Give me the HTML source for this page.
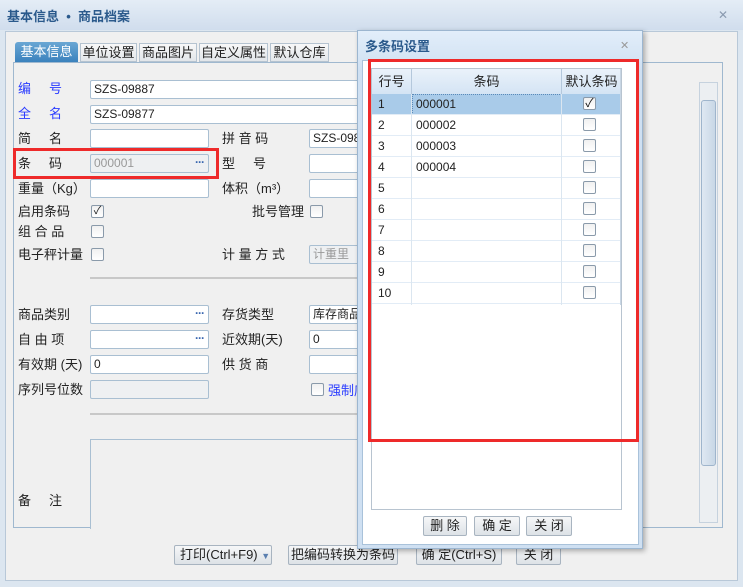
<!DOCTYPE html>
<html><head><meta charset="utf-8"><style>
*{margin:0;padding:0;box-sizing:border-box}
body{width:743px;height:587px;overflow:hidden;background:#dce6f0;font-family:"Liberation Sans","Noto Sans CJK SC",sans-serif;font-size:12px;color:#222;position:relative}
.a{position:absolute}
.lb{position:absolute;font-size:13px;line-height:18px;white-space:pre}
.in{position:absolute;height:19px;border:1px solid #a9bfd2;border-radius:2px;background:#fff;font-size:12px;line-height:17px;padding-left:3px;overflow:hidden;white-space:nowrap}
.dis{background:#eef0f2;color:#999}
.dots{position:absolute;right:4px;top:-1px;color:#3a67b0;font-weight:bold;letter-spacing:-1px}
.cb{position:absolute;width:13px;height:13px;border:1px solid #8a9aaa;border-radius:2px;background:linear-gradient(#f0f0f0,#fff)}
.btn{position:absolute;height:20px;border:1px solid #a8b4c0;border-radius:2px;background:linear-gradient(#f6f7f8,#dde2e7);font-size:13px;line-height:18px;text-align:center;white-space:nowrap;overflow:hidden}
.blue{color:#2a3cff}
</style></head><body>
<div class="a" style="left:0;top:0;width:743px;height:30px;background:linear-gradient(#e4edf6,#d0dded)"></div>
<div class="a" style="left:7px;top:6px;font-size:13px;font-weight:bold;color:#2b5a8c">基本信息 &nbsp;•&nbsp; 商品档案</div>
<div class="a" style="left:718px;top:8px;color:#8a9ab0;font-size:12px">✕</div>
<div class="a" style="left:5px;top:31px;width:733px;height:550px;background:#f0f0f0;border:1px solid #b8c8d8"></div>
<div class="a" style="left:15px;top:42px;width:63px;height:20px;background:linear-gradient(#6aa7d4,#3b82bd);color:#fff;font-size:13px;line-height:20px;text-align:center;border-radius:3px 3px 0 0">基本信息</div>
<div class="a" style="left:80px;top:43px;width:57px;height:19px;background:linear-gradient(#f8f8f8,#e2e6ea);border:1px solid #b5c3d0;font-size:13px;line-height:17px;text-align:center">单位设置</div>
<div class="a" style="left:139px;top:43px;width:58px;height:19px;background:linear-gradient(#f8f8f8,#e2e6ea);border:1px solid #b5c3d0;font-size:13px;line-height:17px;text-align:center">商品图片</div>
<div class="a" style="left:199px;top:43px;width:69px;height:19px;background:linear-gradient(#f8f8f8,#e2e6ea);border:1px solid #b5c3d0;font-size:13px;line-height:17px;text-align:center">自定义属性</div>
<div class="a" style="left:270px;top:43px;width:59px;height:19px;background:linear-gradient(#f8f8f8,#e2e6ea);border:1px solid #b5c3d0;font-size:13px;line-height:17px;text-align:center">默认仓库</div>
<div class="a" style="left:13px;top:62px;width:710px;height:466px;border:1px solid #9fb8cf;background:#f0f0f0"></div>
<div class="a" style="left:699px;top:82px;width:19px;height:441px;border:1px solid #c6d2de;background:#eceff2"></div>
<div class="a" style="left:701px;top:100px;width:15px;height:366px;border:1px solid #9fb5cc;border-radius:3px;background:linear-gradient(90deg,#dfe8f2,#c8d7e6)"></div>
<div class="lb blue" style="left:18px;top:80px">编     号</div>
<div class="in" style="left:90px;top:80px;width:270px">SZS-09887</div>
<div class="lb blue" style="left:18px;top:105px">全     名</div>
<div class="in" style="left:90px;top:105px;width:270px">SZS-09877</div>
<div class="lb" style="left:18px;top:130px">简     名</div>
<div class="in" style="left:90px;top:129px;width:119px"></div>
<div class="lb" style="left:222px;top:130px">拼 音 码</div>
<div class="in" style="left:309px;top:129px;width:60px">SZS-098</div>
<div class="lb" style="left:18px;top:155px">条     码</div>
<div class="in dis" style="left:90px;top:154px;width:119px">000001<span class="dots">···</span></div>
<div class="a" style="left:13px;top:148px;width:206px;height:31px;border:3px solid #ee2a2a"></div>
<div class="lb" style="left:222px;top:155px">型     号</div>
<div class="in" style="left:309px;top:154px;width:60px"></div>
<div class="lb" style="left:18px;top:180px">重量（Kg）</div>
<div class="in" style="left:90px;top:179px;width:119px"></div>
<div class="lb" style="left:222px;top:180px">体积（m³）</div>
<div class="in" style="left:309px;top:179px;width:60px"></div>
<div class="lb" style="left:18px;top:203px">启用条码</div>
<div class="cb" style="left:91px;top:205px;font-size:11px;line-height:11px;text-align:center">✓</div>
<div class="lb" style="left:252px;top:203px">批号管理</div>
<div class="cb" style="left:310px;top:205px"></div>
<div class="lb" style="left:18px;top:223px">组 合 品</div>
<div class="cb" style="left:91px;top:225px"></div>
<div class="lb" style="left:18px;top:246px">电子秤计量</div>
<div class="cb" style="left:91px;top:248px"></div>
<div class="lb" style="left:222px;top:246px">计 量 方 式</div>
<div class="in dis" style="left:309px;top:245px;width:60px">计重里</div>
<div class="a" style="left:90px;top:277px;width:280px;height:2px;background:#c8c8c8"></div>
<div class="lb" style="left:18px;top:306px">商品类别</div>
<div class="in" style="left:90px;top:305px;width:119px"><span class="dots">···</span></div>
<div class="lb" style="left:222px;top:306px">存货类型</div>
<div class="in" style="left:309px;top:305px;width:60px">库存商品</div>
<div class="lb" style="left:18px;top:331px">自 由 项</div>
<div class="in" style="left:90px;top:330px;width:119px"><span class="dots">···</span></div>
<div class="lb" style="left:222px;top:331px">近效期(天)</div>
<div class="in" style="left:309px;top:330px;width:60px">0</div>
<div class="lb" style="left:18px;top:356px">有效期 (天)</div>
<div class="in" style="left:90px;top:355px;width:119px">0</div>
<div class="lb" style="left:222px;top:356px">供 货 商</div>
<div class="in" style="left:309px;top:355px;width:60px"></div>
<div class="lb" style="left:18px;top:381px">序列号位数</div>
<div class="in dis" style="left:90px;top:380px;width:119px"></div>
<div class="cb" style="left:311px;top:383px"></div>
<div class="lb blue" style="left:328px;top:382px">强制序</div>
<div class="a" style="left:90px;top:413px;width:280px;height:2px;background:#c8c8c8"></div>
<div class="a" style="left:90px;top:439px;width:280px;height:90px;border:1px solid #a9bfd2;border-bottom:none;background:#f0f0f0"></div>
<div class="lb" style="left:18px;top:492px">备     注</div>
<div class="btn" style="left:174px;top:545px;width:98px;text-align:left;padding-left:5px">打印(Ctrl+F9) <span style="color:#5a7fb0;font-size:9px">▼</span></div>
<div class="btn" style="left:288px;top:545px;width:110px">把编码转换为条码</div>
<div class="btn" style="left:416px;top:545px;width:86px">确 定(Ctrl+S)</div>
<div class="btn" style="left:516px;top:545px;width:45px">关 闭</div>
<div class="a" style="left:357px;top:30px;width:286px;height:519px;background:linear-gradient(#e2eefa,#cfe0f2 40px,#cfe0f2);border:1px solid #9cb6d0;box-shadow:2px 2px 5px rgba(0,0,0,.3)"></div>
<div class="a" style="left:365px;top:36px;font-size:13px;font-weight:bold;color:#2b5a8c">多条码设置</div>
<div class="a" style="left:620px;top:39px;color:#999;font-size:11px">✕</div>
<div class="a" style="left:362px;top:60px;width:277px;height:485px;background:#fff;border:1px solid #a9c2da"></div>
<div class="a" style="left:371px;top:68px;width:251px;height:442px;border:1px solid #b8c4d0;background:#fff"></div>
<div class="a" style="left:372px;top:69px;width:249px;height:25px;background:linear-gradient(#eaf2fa,#d4e4f4)"></div>
<div class="a" style="left:372px;top:69px;width:40px;height:25px;font-size:13px;line-height:25px;text-align:center;border-right:1px solid #b4c8dc">行号</div>
<div class="a" style="left:412px;top:69px;width:150px;height:25px;font-size:13px;line-height:25px;text-align:center;border-right:1px solid #b4c8dc">条码</div>
<div class="a" style="left:562px;top:69px;width:59px;height:25px;font-size:13px;line-height:25px;text-align:center">默认条码</div>
<div class="a" style="left:372px;top:94px;width:249px;height:21px;background:#a9cbe9"></div>
<div class="a" style="left:412px;top:94px;width:150px;height:21px;border:1px dotted #5b8ab8"></div>
<div class="a" style="left:372px;top:94px;width:249px">
<div style="position:relative;height:21px;border-bottom:1px solid #e2ecf6"><span class="a" style="left:6px;top:3px">1</span><span class="a" style="left:44px;top:3px">000001</span><span class="cb" style="left:211px;top:3px;font-size:12px;line-height:11px;text-align:center;color:#111">✓</span></div>
<div style="position:relative;height:21px;border-bottom:1px solid #e2ecf6"><span class="a" style="left:6px;top:3px">2</span><span class="a" style="left:44px;top:3px">000002</span><span class="cb" style="left:211px;top:3px"></span></div>
<div style="position:relative;height:21px;border-bottom:1px solid #e2ecf6"><span class="a" style="left:6px;top:3px">3</span><span class="a" style="left:44px;top:3px">000003</span><span class="cb" style="left:211px;top:3px"></span></div>
<div style="position:relative;height:21px;border-bottom:1px solid #e2ecf6"><span class="a" style="left:6px;top:3px">4</span><span class="a" style="left:44px;top:3px">000004</span><span class="cb" style="left:211px;top:3px"></span></div>
<div style="position:relative;height:21px;border-bottom:1px solid #e2ecf6"><span class="a" style="left:6px;top:3px">5</span><span class="cb" style="left:211px;top:3px"></span></div>
<div style="position:relative;height:21px;border-bottom:1px solid #e2ecf6"><span class="a" style="left:6px;top:3px">6</span><span class="cb" style="left:211px;top:3px"></span></div>
<div style="position:relative;height:21px;border-bottom:1px solid #e2ecf6"><span class="a" style="left:6px;top:3px">7</span><span class="cb" style="left:211px;top:3px"></span></div>
<div style="position:relative;height:21px;border-bottom:1px solid #e2ecf6"><span class="a" style="left:6px;top:3px">8</span><span class="cb" style="left:211px;top:3px"></span></div>
<div style="position:relative;height:21px;border-bottom:1px solid #e2ecf6"><span class="a" style="left:6px;top:3px">9</span><span class="cb" style="left:211px;top:3px"></span></div>
<div style="position:relative;height:21px;border-bottom:1px solid #e2ecf6"><span class="a" style="left:6px;top:3px">10</span><span class="cb" style="left:211px;top:3px"></span></div>
</div>
<div class="a" style="left:411px;top:94px;width:1px;height:211px;background:#dbe6f0"></div>
<div class="a" style="left:561px;top:94px;width:1px;height:211px;background:#dbe6f0"></div>
<div class="a" style="left:620px;top:69px;width:1px;height:236px;background:#c8d6e4"></div>
<div class="a" style="left:368px;top:59px;width:271px;height:383px;border:3px solid #ee2a2a"></div>
<div class="btn" style="left:423px;top:516px;width:44px">删 除</div>
<div class="btn" style="left:474px;top:516px;width:46px">确 定</div>
<div class="btn" style="left:526px;top:516px;width:46px">关 闭</div>
</body></html>
